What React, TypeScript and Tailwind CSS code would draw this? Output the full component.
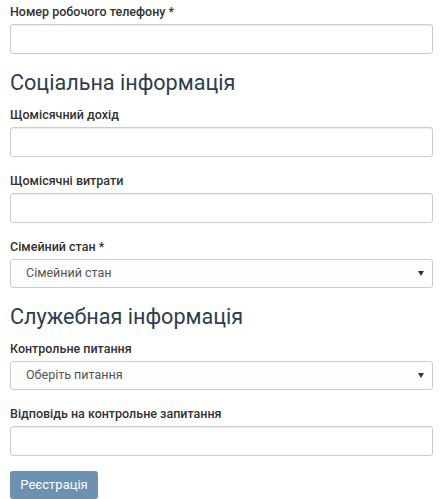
import React from "react"

const font = { fontFamily: "Roboto, 'Noto Sans', Arial, sans-serif" }

function Label({ children }: { children: React.ReactNode }) {
  return <label className="block text-[12.5px] leading-[17px] font-medium text-[#333] mb-[4px]">{children}</label>
}

function TextInput() {
  return (
    <input
      type="text"
      className="block w-full h-[30px] px-[12px] text-[12px] text-[#555] bg-white border border-[#ccc] rounded-[3px] shadow-[inset_0_1px_1px_rgba(0,0,0,0.075)] outline-none"
    />
  )
}

function Select({ placeholder }: { placeholder: string }) {
  return (
    <div className="relative">
      <select
        defaultValue=""
        className="block w-full h-[29px] pl-[15px] pr-[24px] text-[12.5px] text-[#555] bg-[#fdfdfd] border border-[#ccc] rounded-[3px] appearance-none outline-none"
        style={font}
      >
        <option value="" disabled>
          {placeholder}
        </option>
      </select>
      <svg
        className="pointer-events-none absolute right-[9px] top-[12px]"
        width="6"
        height="5"
        viewBox="0 0 6 5"
      >
        <path d="M0 0h6L3 5z" fill="#333" />
      </svg>
    </div>
  )
}

function Field({ label, children }: { label: string; children: React.ReactNode }) {
  return (
    <div className="mb-[15px]">
      <Label>{label}</Label>
      {children}
    </div>
  )
}

function Heading({ children }: { children: React.ReactNode }) {
  return <h3 className="mt-[2px] mb-[9px] text-[21.6px] leading-[28px] font-normal text-[#2c3e50]">{children}</h3>
}

export default function App() {
  return (
    <div className="w-[441px] h-[499px] overflow-hidden bg-white pt-[3px] pl-[10px] pr-[8px]" style={font}>
      <Field label="Номер робочого телефону *">
        <TextInput />
      </Field>

      <Heading>Соціальна інформація</Heading>
      <Field label="Щомісячний дохід">
        <TextInput />
      </Field>
      <Field label="Щомісячні витрати">
        <TextInput />
      </Field>
      <Field label="Сімейний стан *">
        <Select placeholder="Сімейний стан" />
      </Field>

      <Heading>Служебная інформація</Heading>
      <Field label="Контрольне питання">
        <Select placeholder="Оберіть питання" />
      </Field>
      <Field label="Відповідь на контрольне запитання">
        <TextInput />
      </Field>

      <button
        type="button"
        className="h-[28px] w-[88px] rounded-[3px] bg-[#6d91b0] text-white text-[13px] leading-[28px]"
        style={font}
      >
        Реєстрація
      </button>
    </div>
  )
}
